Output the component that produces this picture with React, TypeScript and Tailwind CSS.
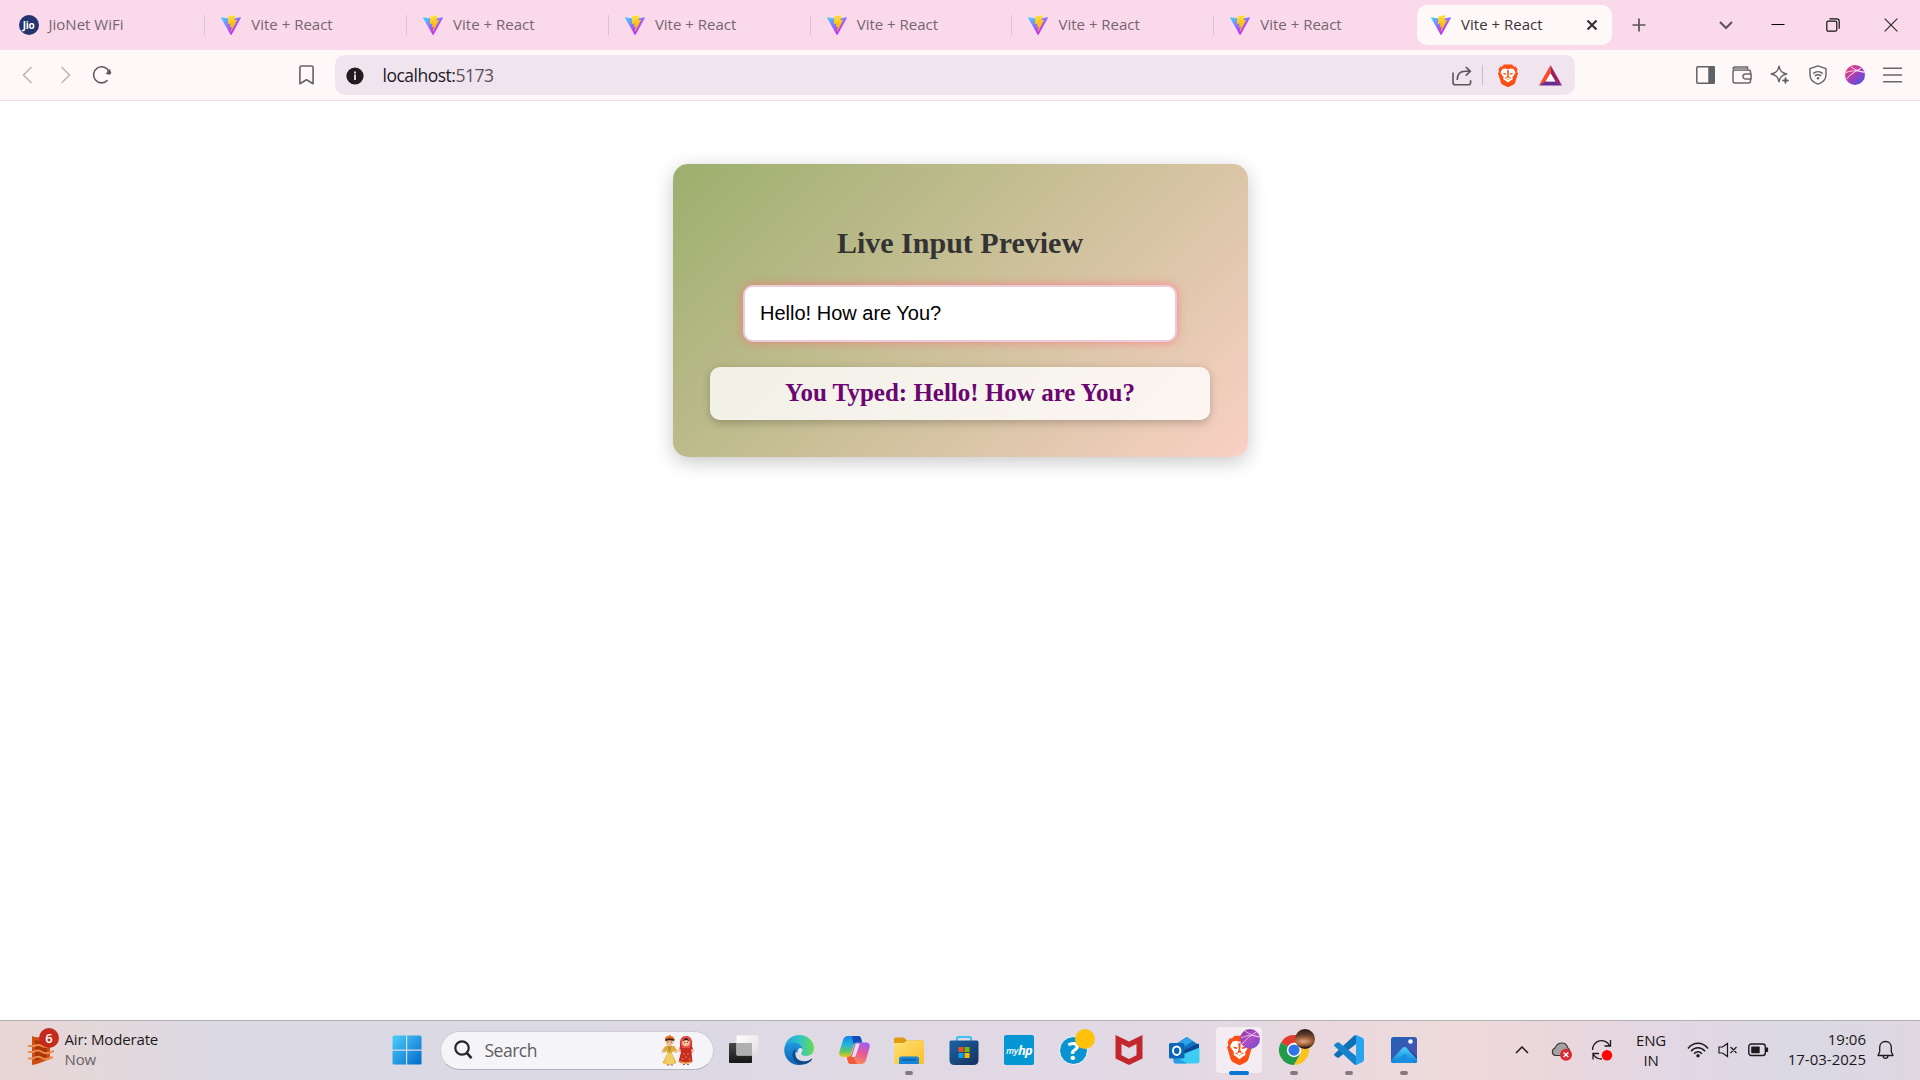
import React from "react";

const ViteLogo = () => (
  <svg width="20" height="20" viewBox="0 0 256 257" className="shrink-0">
    <defs>
      <linearGradient id="va" x1="-.8%" x2="57.6%" y1="7.6%" y2="78.4%">
        <stop offset="0%" stopColor="#41D1FF" />
        <stop offset="100%" stopColor="#BD34FE" />
      </linearGradient>
      <linearGradient id="vb" x1="43.4%" x2="50.3%" y1="2.2%" y2="89%">
        <stop offset="0%" stopColor="#FFEA83" />
        <stop offset="8.3%" stopColor="#FFDD35" />
        <stop offset="100%" stopColor="#FFA800" />
      </linearGradient>
    </defs>
    <path fill="url(#va)" d="M255.153 37.938 134.897 252.976c-2.483 4.44-8.862 4.466-11.382.048L.875 37.958c-2.746-4.814 1.371-10.646 6.827-9.67l120.385 21.517a6.537 6.537 0 0 0 2.322-.004l117.867-21.483c5.438-.991 9.574 4.796 6.877 9.62Z" />
    <path fill="url(#vb)" d="M185.432.063 96.44 17.501a3.268 3.268 0 0 0-2.634 3.014l-5.474 92.456a3.268 3.268 0 0 0 3.997 3.378l24.777-5.718c2.318-.535 4.413 1.507 3.936 3.838l-7.361 36.047c-.495 2.426 1.782 4.5 4.151 3.78l15.304-4.649c2.372-.72 4.652 1.36 4.15 3.788l-11.698 56.621c-.732 3.542 3.979 5.473 5.943 2.437l1.313-2.028 72.516-144.72c1.215-2.423-.88-5.186-3.54-4.672l-25.505 4.922c-2.396.462-4.435-1.77-3.759-4.114l16.646-57.705c.677-2.35-1.37-4.583-3.769-4.113Z" />
  </svg>
);

const JioLogo = () => (
  <span className="-ml-px flex size-5 shrink-0 items-center justify-center rounded-full bg-[#23346f] font-['Open_Sans',sans-serif] text-[10px] leading-none font-bold tracking-[-0.3px] text-white">
    Jio
  </span>
);

const BraveShield = ({ width, height }: { width: number; height: number }) => (
  <svg width={width} height={height} viewBox="0 0 40 46" preserveAspectRatio="none" className="shrink-0">
    <path d="M12 1h16l4 4.500 3.500-.5L39 11l-1.200 4L40 19l-1.500 4-4 13.500q-1 3-3.500 5L22 45.500q-2 1-4 0L9 41.500q-2.500-2-3.500-5L1.500 23 0 19l2.200-4L1 11l3.500-6 3.500.500z" fill="#fb4f13" />
    <path d="M9 10l5-1 6 1.500L26 9l5 1 4 6.500-1.500 3.500-4.500 6 .5 4.500-4 2.500L20 37l-5.500-4-4-2.500.5-4.500-4.500-6L5 16.500z" fill="#fff" />
    <path d="M9.500 17.500l7.500 1.500-1.500 2.500-4-.8zM30.500 17.500L23 19l1.500 2.500 4-.8zM18 12l2 .8 2-.8-.8 11 1.800 2.500-3 1.800-3-1.800 1.800-2.500zM13 28l7-2.300L27 28l-7 4z" fill="#fb4f13" />
    <path d="M15.500 28.600L20 27l4.500 1.600-4.500 2.800z" fill="#fff" />
  </svg>
);

const Tab = ({ title, jio }: { title: string; jio?: boolean }) => (
  <div className="group flex h-[50px] w-[201.8px] shrink-0 items-center">
    <div className="ml-4 flex flex-1 items-center">
      {jio ? <JioLogo /> : <ViteLogo />}
      <span className="ml-2.5 pb-[2px] text-[15px] text-[#75666f]">{title}</span>
    </div>
    <div className="h-5 w-px bg-[#dcc3cf] group-[:nth-child(8)]:bg-transparent" />
  </div>
);

const TabStrip = () => (
  <div className="flex h-[50px] items-center bg-[#fad9ea]">
    <div className="w-[3.5px]" />
    <Tab title="JioNet WiFi" jio />
    {[1, 2, 3, 4, 5, 6].map((i) => (
      <Tab key={i} title="Vite + React" />
    ))}
    <div className="ml-[1px] flex h-10 w-[195px] items-center rounded-[10px] bg-[#fff8f8] pr-[13px] pl-3.5">
      <ViteLogo />
      <span className="ml-2.5 flex-1 pb-[2px] text-[15px] text-[#3d3338]">Vite + React</span>
      <svg width="14" height="14" viewBox="0 0 14 14" stroke="#3b3135" strokeWidth="2.2">
        <path d="M2.5 2.5l9 9M11.5 2.5l-9 9" />
      </svg>
    </div>
    <svg className="ml-[19px]" width="16" height="16" viewBox="0 0 16 16" stroke="#5c5257" strokeWidth="1.7">
      <path d="M8 1.5v13M1.5 8h13" />
    </svg>
    <svg className="ml-[71px]" width="16" height="16" viewBox="0 0 16 16" fill="none" stroke="#5c5257" strokeWidth="2">
      <path d="M2 5l6 6 6-6" />
    </svg>
    <svg className="ml-[37px] mb-[1px]" width="14" height="14" viewBox="0 0 14 14" stroke="#000">
      <path d="M.5 6.500h13" />
    </svg>
    <svg className="ml-[41px] mb-[1px]" width="14" height="14" viewBox="0 0 14 14" fill="none" stroke="#111" strokeWidth="1.2">
      <rect x=".8" y="3.2" width="10" height="10" rx="1.5" />
      <path d="M3.500.8h7.200c1.500 0 2.500 1 2.500 2.500v7.500" />
    </svg>
    <svg className="ml-[44px] mb-[1px]" width="14" height="14" viewBox="0 0 14 14" stroke="#222" strokeWidth="1.1">
      <path d="M.7.7l12.600 12.600M13.300.7L.7 13.300" />
    </svg>
  </div>
);

const Toolbar = () => (
  <div className="flex h-[51px] items-center border-b border-[#f3dbe5] bg-[#fff8f8]">
    <svg className="ml-[21px]" width="12" height="18" viewBox="0 0 12 18" fill="none" stroke="#bdb6b8" strokeWidth="1.6">
      <path d="M10.500 1L2.500 9l8 8" />
    </svg>
    <svg className="ml-[27px]" width="12" height="18" viewBox="0 0 12 18" fill="none" stroke="#bdb6b8" strokeWidth="1.6">
      <path d="M1.500 1l8 8-8 8" />
    </svg>
    <svg className="ml-[20px]" width="20" height="20" viewBox="0 0 20 20" fill="none" stroke="#5f5a5d" strokeWidth="1.6">
      <path d="M15.600 15.300A8.100 8.100 0 1 1 16.900 6.200" />
      <circle cx="17" cy="7.600" r="2.200" fill="#5f5a5d" stroke="none" />
      <path d="M17.800 4v4.500h-4" strokeWidth="1" />
    </svg>
    <svg className="ml-[187px]" width="15" height="20" viewBox="0 0 15 20" fill="none" stroke="#666165" strokeWidth="1.6">
      <path d="M.9 2.500c0-.9.700-1.500 1.500-1.500h10.200c.800 0 1.500.600 1.500 1.500v16.200l-6.600-3.900-6.600 3.900z" strokeLinejoin="round" />
    </svg>
    <div className="ml-[21px] flex h-10 w-[1240px] items-center rounded-[10px] bg-[#f0e4ef]">
      <svg className="mt-[2px] ml-[11px]" width="18" height="18" viewBox="0 0 18 18">
        <circle cx="9" cy="9" r="8.600" fill="#231a1f" />
        <path d="M8 7.600h2v5.400H8zM8 4.600h2v1.900H8z" fill="#d9ced6" />
      </svg>
      <span className="ml-[18.500px] flex-1 pb-px text-[17.500px] leading-6 tracking-[-0.5px] text-[#231a1f]">
        localhost:<span className="text-[#5c5058]">5173</span>
      </span>
      <svg className="mt-[1px]" width="20" height="20" viewBox="0 0 20 20" fill="none" stroke="#5c5459" strokeWidth="1.600">
        <path d="M1 6.500v10c0 1.400.900 2.300 2.300 2.300h13c1.300 0 2.300-.900 2.300-2.300v-2.300" />
        <path d="M5.200 14c0-5.500 3-8.700 8-8.700h5M13.800 1l4.500 4.300-4.500 4.300" />
      </svg>
      <div className="ml-[10px] h-5 w-px bg-[#c9bdc8]" />
      <span className="ml-[14px] flex w-[22px] justify-center">
        <BraveShield width={20} height={23} />
      </span>
      <svg className="mr-[13px] ml-[20px]" width="23" height="21" viewBox="0 0 23 21">
        <path d="M11.500 0L0 20.500l7-4.200 4.500-8z" fill="#ff4724" />
        <path d="M11.500 0L23 20.500l-7-4.200-4.500-8z" fill="#9e1f63" />
        <path d="M0 20.500h23l-6.500-4.200h-10z" fill="#662d91" />
        <path d="M11.500 8.200l-5 8.300h10z" fill="#fff" />
      </svg>
    </div>
    <svg className="ml-[121px]" width="19" height="18" viewBox="0 0 19 18" fill="none" stroke="#5f6368" strokeWidth="1.500">
      <rect x=".8" y=".8" width="17.400" height="16.400" rx="1" />
      <path d="M13 1h5v16h-5z" fill="#5f6368" />
    </svg>
    <svg className="ml-[17px]" width="20" height="18" viewBox="0 0 20 18" fill="none" stroke="#6a666a" strokeWidth="1.500">
      <path d="M1 3.200C1 2 1.800 1 3 1h12.500v3" />
      <rect x="1" y="4" width="17.500" height="13" rx="2" />
      <path d="M1.500 2.500h14v1.500h-14z" fill="#bdb8bb" strokeWidth=".6" />
      <path d="M19 8h-5.500a2.500 2.500 0 0 0 0 5H19z" fill="#fff8f8" />
    </svg>
    <svg className="ml-[18px]" width="20" height="20" viewBox="0 0 20 20" fill="none" stroke="#626067" strokeWidth="1.500" strokeLinejoin="round">
      <path d="M9 1.300c.9 4.600 2.700 6.500 7.700 7.700-5 1.100-6.800 3-7.700 7.700-.9-4.700-2.700-6.600-7.700-7.700 5-1.200 6.800-3.100 7.700-7.700z" />
      <path d="M15.500 12l.9 2.600 2.600.9-2.600.9-.9 2.600-.9-2.600-2.600-.9 2.600-.9z" fill="#626067" strokeWidth=".6" />
    </svg>
    <svg className="ml-[19px]" width="18" height="20" viewBox="0 0 18 20" fill="none" stroke="#626067" strokeWidth="1.400">
      <path d="M9 .9l8 2.700v6.200c0 4.400-3.200 7.700-8 9.300-4.800-1.600-8-4.900-8-9.300V3.600z" strokeLinejoin="round" />
      <path d="M4.200 8.600c2.800-2.400 6.800-2.400 9.600 0M5.900 10.900c1.900-1.500 4.300-1.500 6.200 0" />
      <circle cx="9" cy="13.200" r="1.200" fill="#626067" stroke="none" />
    </svg>
    <svg className="ml-[18px]" width="20" height="20" viewBox="0 0 20 20">
      <defs>
        <linearGradient id="prof" x1="0" y1="0" x2="1" y2="1">
          <stop offset="0.150" stopColor="#e8407c" />
          <stop offset="0.550" stopColor="#9b3fc0" />
          <stop offset="0.900" stopColor="#4f55e0" />
        </linearGradient>
      </defs>
      <circle cx="10" cy="10" r="10" fill="url(#prof)" />
      <path d="M1.500 14C6 9 12 5 16.500 3M1 7.500C7 5 13 5.500 18.500 7.500M6 2c3 2 7 4 13.500 5" stroke="#ffdcec" strokeWidth="1" fill="none" />
    </svg>
    <svg className="ml-[18px]" width="19" height="16" viewBox="0 0 19 16" stroke="#6a666a" strokeWidth="1.600">
      <path d="M0 1.200h19M0 8h19M0 14.800h19" />
    </svg>
  </div>
);

const Preview = () => (
  <div className="flex h-[293px] w-[575px] flex-col items-center rounded-[15px] bg-linear-135 from-[#9caf6d] to-[#fad0c4] pt-[62px] shadow-[0_5px_19px_rgba(0,0,0,0.220)]">
    <h2 className="h-[34px] font-['Liberation_Serif',serif] text-[30px] leading-[34px] font-bold text-[#333]">Live Input Preview</h2>
    <input
      readOnly
      value="Hello! How are You?"
      className="mt-[25px] h-[57px] w-[434px] rounded-[10px] border-2 border-[#ecccd8] bg-white px-[15px] font-['Liberation_Sans',sans-serif] text-[20px] text-black shadow-[0_0_10px_rgba(255,105,120,0.700)] outline-none"
    />
    <p className="mt-[25px] h-[53px] w-[500px] rounded-[10px] bg-white/80 text-center font-['Liberation_Serif',serif] text-[25px] leading-[51px] font-bold text-[#6a0572] shadow-[0_2.500px_8px_rgba(0,0,0,0.220)]">
      You Typed: Hello! How are You?
    </p>
  </div>
);

const Cell = ({ children, run, active }: { children: React.ReactNode; run?: boolean; active?: boolean }) => (
  <div className="relative flex h-[59px] w-[55px] shrink-0 items-center justify-center">
    {active && <div className="absolute top-[5px] left-[3.500px] h-12 w-12 rounded-[5px] border border-[#e4d9e2] bg-[#f3ecf2]" />}
    <div className="relative flex">{children}</div>
    {run && <div className="absolute bottom-[5px] h-1 w-2 rounded-full bg-[#85797f]" />}
    {active && <div className="absolute bottom-[5px] h-1 w-5 rounded-full bg-[#0a77d5]" />}
  </div>
);

const Start = () => (
  <svg width="30" height="30" viewBox="0 0 30 30">
    <defs>
      <linearGradient id="win" x1="0" y1="0" x2="30" y2="30" gradientUnits="userSpaceOnUse">
        <stop stopColor="#4fd0fb" />
        <stop offset="1" stopColor="#0068ca" />
      </linearGradient>
    </defs>
    <path d="M2 .5h12v14H.5V2A1.500 1.500 0 0 1 2 .5zM15.200.5H28A1.500 1.500 0 0 1 29.500 2v12.500H15.200zM.5 15.700H14v13.800H2A1.500 1.500 0 0 1 .5 28zM15.200 15.700h14.300V28a1.500 1.500 0 0 1-1.500 1.500H15.200z" fill="url(#win)" />
  </svg>
);

const Couple = () => (
  <svg width="34" height="32" viewBox="0 0 34 32">
    <path d="M8.500 11l-4.500 1.500-3 4 2 2.500 2.500-2 .8 2.500L1.500 29q7 3.500 14 0L11 19.500l.8-2.500 2.700 2 2-2.500-3-4z" fill="#dcae42" />
    <path d="M3 29q5.500 2.500 11 0l-3.500-10h-4z" fill="#f2cf62" />
    <path d="M6.500 12.500L8.500 19l2-6.500" fill="#c4872c" />
    <circle cx="8.500" cy="7.500" r="4.200" fill="#f1bd92" />
    <path d="M4 6q-.5-4 4.500-4t5 4q-4-1.500-9.500 0z" fill="#e0641f" />
    <path d="M4 5.500q5-2 9.500 0l-.3 1.500q-4-1.500-8.900 0z" fill="#3d1c12" />
    <path d="M7 2l2-1.500 1 1.500z" fill="#f28c2c" />
    <circle cx="2" cy="17.500" r="1.500" fill="#f1bd92" /><circle cx="15" cy="17.500" r="1.500" fill="#f1bd92" />
    <path d="M19 12q-1-10 6-10t6 10l1.500 5-2 2 1 9q-7 3-14 0l2.500-10-2-1z" fill="#c92a22" />
    <path d="M19.500 9q0-7 5.500-7t5.500 7l-1.500 5h-8z" fill="#e4504c" />
    <circle cx="25" cy="8.500" r="3.800" fill="#f3c09a" />
    <path d="M21.500 7.500q1-3.500 3.500-3.500t3.500 3.500q-3.500-3-7 0z" fill="#4a1f18" />
    <circle cx="18.500" cy="16.500" r="1.500" fill="#f1bd92" /><circle cx="31.500" cy="16.500" r="1.500" fill="#f1bd92" />
    <g fill="#f0b840"><circle cx="23" cy="20" r=".7" /><circle cx="27" cy="20" r=".7" /><circle cx="25" cy="23" r=".7" /><circle cx="21.500" cy="25" r=".7" /><circle cx="28.500" cy="25" r=".7" /></g>
    <path d="M18 27.500q7 3 13.500 0" stroke="#f0b840" strokeWidth="1" fill="none" />
    <path d="M6 31h2M10 31h2M22 30.500h2M26 30.500h2" stroke="#a05a30" strokeWidth="1.200" />
    <path d="M6.500 8h.8M9.800 8h.8M23.400 8.500h.8M26 8.500h.8" stroke="#40201a" strokeWidth="1" />
  </svg>
);

const TaskView = () => (
  <svg width="30" height="30" viewBox="0 0 30 30">
    <defs>
      <linearGradient id="tv" x1="0" y1="0" x2="0" y2="1"><stop stopColor="#4a4a4a" /><stop offset="1" stopColor="#151515" /></linearGradient>
      <linearGradient id="tw" x1="0" y1="0" x2="1" y2="1"><stop stopColor="#fff" /><stop offset="1" stopColor="#dedede" /></linearGradient>
    </defs>
    <rect x="0" y="8" width="23" height="20" rx="1" fill="url(#tv)" />
    <rect x="7.500" y=".5" width="22" height="20" rx="1" fill="url(#tw)" />
    <path d="M7.500 8H23v12.500H8.500a1 1 0 0 1-1-1z" fill="#b0b0b0" />
  </svg>
);

const Edge = () => (
  <svg width="30" height="30" viewBox="0 0 30 30">
    <defs>
      <linearGradient id="e1" x1="0" y1=".3" x2="1" y2=".3"><stop stopColor="#23a2dc" /><stop offset=".5" stopColor="#2fc2c9" /><stop offset="1" stopColor="#69dc50" /></linearGradient>
      <linearGradient id="e2" x1="0" y1="0" x2="0" y2="1"><stop stopColor="#1f9ade" /><stop offset="1" stopColor="#0d5fb4" /></linearGradient>
    </defs>
    <path d="M.5 13C1.500 5 8 0 15 0c8.500 0 15 6 15 13 0 5-3.500 8-8 8-3.500 0-5-1.200-5-2.500 0-.8 1.500-1.500 1.500-4C18.500 11 15 8 10.500 8 5.500 8 1.500 10 .5 13z" fill="url(#e1)" />
    <path d="M.3 13.500C1 9.500 5 7.500 9.500 7.500c5.500 0 9 3.500 9 7 0 2.500-1.500 3.300-1.500 4-3-2-5.500-1-5.500-1C11 24 16 29 22 27c-2 2-5 3-7 3C6 30-.5 22 .3 13.500z" fill="url(#e2)" />
    <path d="M12 13.500c-2 4-1.500 9 3 11.500 4 2 9 1.500 12-1 .6-.5 1.500.2 1 .8-2.500 3.500-7 5.200-11.500 4.700C9 28.500 5.500 17 12 13.500z" fill="#114a8b" />
    <path d="M18.500 14.500c0 2.500-1.500 3.300-1.500 4s.8 1.700 2 2.100c-5 .5-6.500-4.100-4.500-6.600 1.200-1.500 3-1 4 .5z" fill="#e9e2ec" />
  </svg>
);

const Copilot = () => (
  <svg width="31" height="28" viewBox="0 0 31 28">
    <defs>
      <linearGradient id="c1" x1="0" y1="0" x2="0" y2="1"><stop stopColor="#1684e8" /><stop offset=".4" stopColor="#22b4df" /><stop offset=".75" stopColor="#68c85a" /><stop offset="1" stopColor="#f3c51c" /></linearGradient>
      <linearGradient id="c2" x1=".7" y1="0" x2=".3" y2="1"><stop stopColor="#a55bf0" /><stop offset=".5" stopColor="#ec5b8f" /><stop offset="1" stopColor="#fb9650" /></linearGradient>
    </defs>
    <path d="M19 0c2 0 2.700 1.200 3.200 3l1 3.500h-5c-2 0-3 1-3.700 3L12 18c-.7 2-2 3-4 3H4c-3 0-4.500-2-3.500-5.500L4 4c.8-2.500 2.300-4 5-4z" fill="url(#c1)" />
    <path d="M12 28c-2 0-2.700-1.200-3.200-3l-1-4c3 0 4-1 4.700-3L15 9.500c.7-2 1.700-3 3.700-3H27c3 0 4.500 2 3.500 5.500L27 24c-.8 2.500-2.300 4-5 4z" fill="url(#c2)" />
    <path d="M13 0h6c2 0 2.700 1.200 3.200 3l1 3.500h-5c-2 0-3 .5-3.700 2z" fill="#164bbd" />
    <path d="M18 28h-6c-2 0-2.700-1.200-3.200-3l-1-4c3 0 4-.7 5-3z" fill="#f05b3c" />
    <path d="M16.800 7.500h4l-4 12c-.4 1-1 1.500-2 1.500h-2.300c.5-.7.7-1.400 1-2.200z" fill="#e7dff0" />
  </svg>
);

const Folder = () => (
  <svg className="mt-[2px]" width="30" height="28" viewBox="0 0 30 28">
    <defs><linearGradient id="fo" x1="0" y1="0" x2="1" y2="1"><stop stopColor="#ffe07a" /><stop offset="1" stopColor="#fbbf22" /></linearGradient></defs>
    <path d="M0 2q0-1.500 1.500-1.500H9q1 0 2 1l2 2h15q2 0 2 2V10H0z" fill="#dc9b11" />
    <path d="M0 6h10l3-2.500h15.500Q30 3.500 30 5v20.500q0 1.500-1.500 1.500h-27Q0 27 0 25.500z" fill="url(#fo)" />
    <path d="M5 27v-5q0-2.500 2.500-2.500h15q2.500 0 2.500 2.500v5z" fill="#1685d5" />
    <path d="M8.500 22.800h13" stroke="#0c5a9e" strokeWidth="1.300" strokeLinecap="round" />
  </svg>
);

const Store = () => (
  <svg width="30" height="30" viewBox="0 0 30 30">
    <defs><linearGradient id="st" x1="0" y1="0" x2="1" y2="1"><stop stopColor="#1b63a6" /><stop offset="1" stopColor="#17305c" /></linearGradient></defs>
    <path d="M8 7V3.500Q8 2 9.500 2h11Q22 2 22 3.500V7" fill="none" stroke="#3bc2f2" strokeWidth="2" />
    <path d="M.5 7Q.5 5.500 2 5.500h26q1.500 0 1.500 1.500v18q0 5-5 5h-19q-5 0-5-5z" fill="url(#st)" />
    <path d="M9.500 12h5v5h-5z" fill="#f25022" /><path d="M15.500 12h5v5h-5z" fill="#7fba00" />
    <path d="M9.500 18h5v5h-5z" fill="#00a4ef" /><path d="M15.500 18h5v5h-5z" fill="#ffb900" />
  </svg>
);

const MyHp = () => (
  <div className="flex size-[30px] items-center justify-center rounded-[2px] bg-[#0596d4] font-['Open_Sans',sans-serif] leading-none text-white italic">
    <span className="text-[9px] font-semibold tracking-[-0.3px]">my</span>
    <span className="text-[13px] font-bold tracking-[-0.8px]">hp</span>
  </div>
);

const Help = () => (
  <div className="relative size-[30px]">
    <div className="mt-[1px] flex size-[29px] items-center justify-center rounded-full border-[1.500px] border-white bg-[#0b93d0] font-['Open_Sans',sans-serif] text-[25px] leading-none font-bold text-white">?</div>
    <div className="absolute -top-[6px] left-[16px] size-5 rounded-full bg-[#ffc20c]" />
  </div>
);

const McAfee = () => (
  <svg width="28" height="30" viewBox="0 0 28 30">
    <path d="M.5 0L14 6.500 27.500 0v23.500L14 30 .5 23.500zM6.500 9v11.200L14 24l7.500-3.800V9L14 12.700z" fill="#c1272d" fillRule="evenodd" />
  </svg>
);

const Outlook = () => (
  <svg width="31" height="28" viewBox="0 0 31 28">
    <path d="M4 10L17.500 1 30 9v3L12 22H4z" fill="#1172c5" />
    <path d="M8 8l10-7 6 4-14 9z" fill="#2ba5ea" />
    <path d="M30 7.500v5L15 20V14z" fill="#0a4791" />
    <path d="M30.500 11.500V25q0 2.500-2.500 2.500H7q-2.500 0-2.500-2.500v-3z" fill="#3dcdf3" />
    <path d="M4.500 19L18 27.500H7q-2.500 0-2.500-2.500z" fill="#2b9be4" />
    <rect x="0" y="7" width="15.500" height="15.500" rx="1.500" fill="#0a66b8" />
    <ellipse cx="7.700" cy="14.700" rx="3.700" ry="4.200" fill="none" stroke="#fff" strokeWidth="2" />
  </svg>
);

const Brave = () => (
  <div className="relative flex h-[30px] w-[26px] items-center justify-center">
    <BraveShield width={25} height={30} />
    <svg className="absolute -top-[6px] left-[14px]" width="20" height="20" viewBox="0 0 20 20">
      <defs><linearGradient id="bp" x1="0" y1="0" x2="1" y2="1"><stop offset=".1" stopColor="#8d3f9c" /><stop offset=".5" stopColor="#b04bc4" /><stop offset="1" stopColor="#6b52c8" /></linearGradient></defs>
      <circle cx="10" cy="10" r="10" fill="url(#bp)" />
      <path d="M2 15C6 10 11 6 16.500 3M1 9C7 6 13 6 19 8M5 2c4 3 9 5 14.500 6" stroke="#e9bde8" strokeWidth="1" fill="none" />
    </svg>
  </div>
);

const Chrome = () => (
  <div className="relative size-[30px]">
    <svg width="30" height="30" viewBox="0 0 48 48">
      <path d="M24 24L3.200 12A24 24 0 0 1 44.800 12z" fill="#e33b2e" />
      <path d="M24 24L3.200 12A24 24 0 0 0 24 48l10.400-18z" fill="#229a4a" />
      <path d="M24 48a24 24 0 0 0 20.800-36H24l10.400 18z" fill="#fcc31e" />
      <circle cx="24" cy="24" r="11.500" fill="#fff" />
      <circle cx="24" cy="24" r="9" fill="#2f74e8" />
    </svg>
    <div className="absolute -top-[6px] left-[16px] size-5 rounded-full bg-[radial-gradient(ellipse_75%_32%_at_42%_62%,#e0a986_0%,#a3633c_55%,transparent_100%),linear-gradient(180deg,#2a1812_0%,#6b4230_35%,#53301f_65%,#1d100c_100%)]" />
  </div>
);

const Code = () => (
  <svg width="30" height="30" viewBox="0 0 30 30">
    <path d="M22 0v9L5 22.500q-1 .7-2 0L.6 20.700q-1-1 0-2L20 .8Q21 0 22 0z" fill="#0d6fb5" />
    <path d="M22 30v-9L5 7.500q-1-.7-2 0L.6 9.300q-1 1 0 2L20 29.200q1 .8 2 .8z" fill="#1583cc" />
    <path d="M20.500.6q1-.8 2.200-.3l6 2.800Q30 3.800 30 5.200v19.600q0 1.400-1.300 2.100l-6 2.800q-1.200.5-2.200-.3 1.500.5 1.500-1.400V2q0-1.900-1.500-1.400z" fill="#29a4ee" />
  </svg>
);

const Photos = () => (
  <svg width="26" height="26" viewBox="0 0 26 26">
    <defs>
      <linearGradient id="p1" x1="0" y1="0" x2="1" y2="1"><stop stopColor="#1c63b7" /><stop offset="1" stopColor="#5a4fae" /></linearGradient>
      <linearGradient id="p2" x1="0" y1="0" x2="0" y2="1"><stop stopColor="#4bd3f6" /><stop offset="1" stopColor="#0c7fdc" /></linearGradient>
      <clipPath id="pc"><rect width="26" height="26" rx="2.500" /></clipPath>
    </defs>
    <g clipPath="url(#pc)">
      <path d="M0 0h26v26H0z" fill="url(#p1)" />
      <path d="M15 15l3-3 8 8v6H15z" fill="#243f8e" />
      <path d="M0 23.500L11.500 11q2-2 4 0L26 22v4H0z" fill="url(#p2)" />
      <path d="M4 26l9.500-9.500L23 26z" fill="#1a8fe0" />
      <circle cx="19.500" cy="4.500" r="2.300" fill="#f4f8ff" />
    </g>
  </svg>
);

const AirIcon = () => (
  <div className="relative ml-[28px] h-[32px] w-[26px]">
    <svg width="26" height="32" viewBox="0 0 26 32">
      <path d="M4 2q4 2 8 1l6 2 4 4v16l-5 2-8 3-5 1z" fill="#cf4f10" />
      <path d="M7 6v21l12-4V9z" fill="#a83606" />
      <path d="M0 12h6q4-2 8 0t9 0M0 18h5q5-3 9 0t12-1M0 24.500h5q5-3 9-.500t11-1" stroke="#f08a4b" strokeWidth="2" fill="none" />
    </svg>
    <div className="absolute -top-[6px] left-[11px] flex size-5 items-center justify-center rounded-full bg-[#c42b1c] text-[13px] leading-none font-semibold text-white">6</div>
  </div>
);

const Tray = () => (
  <>
    <svg className="ml-[83.500px]" width="14" height="8" viewBox="0 0 14 8" fill="none" stroke="#1c1a1c" strokeWidth="1.500">
      <path d="M1 7l6-6 6 6" />
    </svg>
    <svg className="mt-[2px] ml-[22px]" width="21" height="19" viewBox="0 0 21 19">
      <path d="M4 13.500a4 4 0 0 1 0-7.500Q6 1 11 1q4.500 0 5.500 4.500 1.500 1 2 3L9 13.500z" fill="#a4a1a3" stroke="#3a3638" strokeWidth="1.200" />
      <circle cx="15" cy="12.700" r="6" fill="#d92b33" />
      <path d="M12.700 10.400l4.600 4.600M17.300 10.400l-4.600 4.600" stroke="#fff" strokeWidth="1.400" />
    </svg>
    <svg className="ml-[19px]" width="22" height="22" viewBox="0 0 22 22" fill="none" stroke="#1c1a1c" strokeWidth="1.300">
      <path d="M1.500 11A9 9 0 0 1 18.500 6.500M19.500 1v6h-6M2 20.500v-6h6M2.500 15.500Q5 20 11 20" />
      <circle cx="16" cy="16.300" r="5.200" fill="#ff0505" stroke="none" />
    </svg>
    <div className="ml-[20px] w-[36px] pb-[1px] text-center text-[15px] leading-5 tracking-[-0.200px] text-[#1b191b]">
      <div>ENG</div>
      <div>IN</div>
    </div>
    <svg className="ml-[18px]" width="22" height="16" viewBox="0 0 22 16" fill="none" stroke="#1c1a1c" strokeWidth="1.400">
      <path d="M1 6.500C6.500-.5 15.500-.5 21 6.500M4 9.200c4-4.700 10-4.700 14 0M7 11.800c2.400-2.700 5.600-2.700 8 0" />
      <circle cx="11" cy="13.700" r="1.700" fill="#1c1a1c" stroke="none" />
    </svg>
    <svg className="ml-[9px]" width="20" height="16" viewBox="0 0 20 16" fill="none" stroke="#1c1a1c" strokeWidth="1.200">
      <path d="M1 5h3.500L9.500 1.500v13L4.500 11H1zM12.500 5l6 6M18.500 5l-6 6" />
    </svg>
    <svg className="ml-[10px]" width="21" height="14" viewBox="0 0 21 14" fill="none" stroke="#1c1a1c" strokeWidth="1.400">
      <rect x=".8" y="1" width="16.500" height="11.500" rx="2.500" />
      <rect x="3.200" y="3.400" width="8.500" height="6.800" rx=".8" fill="#1c1a1c" stroke="none" />
      <path d="M19 4.500v4.500" strokeWidth="2.200" />
    </svg>
    <div className="flex-1 pb-[3px] text-right text-[15px] leading-5 text-[#1b191b]">
      <div>19:06</div>
      <div>17-03-2025</div>
    </div>
    <svg className="mr-[26px] ml-[11px]" width="17" height="20" viewBox="0 0 17 20" fill="none" stroke="#1c1a1c" strokeWidth="1.300" strokeLinejoin="round">
      <path d="M8.500 1.500c-3.500 0-5.800 2.500-5.800 6v4.200L1 15.500h15l-1.700-3.800V7.500c0-3.500-2.300-6-5.800-6zM6 16c.2 1.600 1.200 2.400 2.500 2.400S10.800 17.600 11 16" />
    </svg>
  </>
);

const Taskbar = () => (
  <div className="flex h-[60px] shrink-0 items-center border-t border-[#b3b0b4] bg-[linear-gradient(90deg,#e9d5d5_0%,#e2d8dc_6%,#dad9e4_12%,#dbd9e4_30%,#dfd9e4_45%,#e2d9e5_60%,#ead9de_70%,#eedada_76%,#ead7dc_81%,#e2d7e4_87%,#dad9e4_94%,#dfd7e2_100%)] pb-px">
    <AirIcon />
    <div className="ml-[10.500px] w-[160px] pb-[3px] text-[15px] leading-5 tracking-[-0.150px]">
      <div className="text-[#1b191b]">Air: Moderate</div>
      <div className="text-[#656067]">Now</div>
    </div>
    <div className="ml-[167.500px] flex"><Start /></div>
    <div className="ml-[17.500px] flex h-[39px] w-[274px] shrink-0 items-center rounded-full border border-[#cfccd5] border-b-[#b5b2bb] bg-[#f5f4f8]">
      <svg className="ml-[13px]" width="19" height="20" viewBox="0 0 19 20" fill="none" stroke="#262427" strokeWidth="2.200">
        <circle cx="8" cy="8" r="6.700" />
        <path d="M12.500 12.700l5 5.500" strokeWidth="2.600" />
      </svg>
      <span className="ml-[12px] flex-1 text-[17.500px] tracking-[-0.500px] text-[#5f5d62]">Search</span>
      <div className="mr-[18px] flex"><Couple /></div>
    </div>
    <div className="ml-[3px] flex">
      <Cell><TaskView /></Cell>
      <Cell><Edge /></Cell>
      <Cell><Copilot /></Cell>
      <Cell run><Folder /></Cell>
      <Cell><Store /></Cell>
      <Cell><MyHp /></Cell>
      <Cell><Help /></Cell>
      <Cell><McAfee /></Cell>
      <Cell><Outlook /></Cell>
      <Cell active><Brave /></Cell>
      <Cell run><Chrome /></Cell>
      <Cell run><Code /></Cell>
      <Cell run><Photos /></Cell>
    </div>
    <Tray />
  </div>
);

export default function App() {
  return (
    <div className="flex h-[1080px] w-[1920px] flex-col overflow-hidden bg-white font-['Open_Sans','Noto_Sans',sans-serif]">
      <TabStrip />
      <Toolbar />
      <main className="flex flex-1 items-start justify-center pt-[63px]">
        <Preview />
      </main>
      <Taskbar />
    </div>
  );
}
